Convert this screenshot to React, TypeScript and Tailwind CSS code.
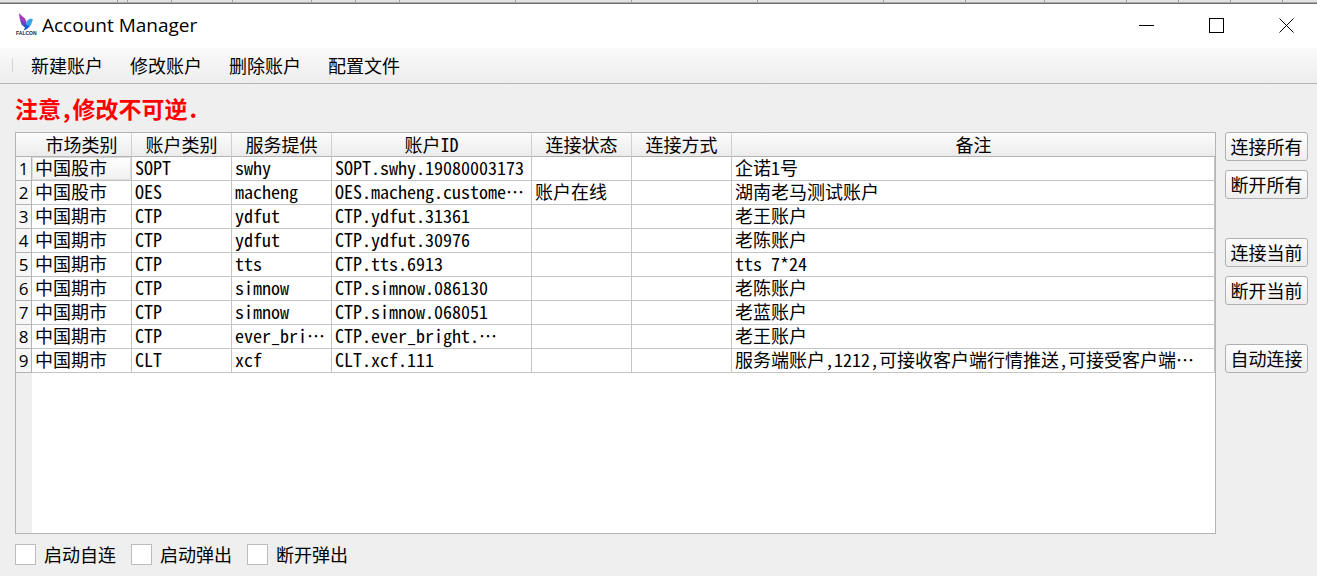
import type { ReactNode } from 'react';

type Account = {
    market: string;
    type: string;
    provider: string;
    id: string;
    status: string;
    mode: string;
    note: string;
};

const columns = ['市场类别', '账户类别', '服务提供', '账户ID', '连接状态', '连接方式', '备注'];

const accounts: Account[] = [
    { market: '中国股市', type: 'SOPT', provider: 'swhy', id: 'SOPT.swhy.19080003173', status: '', mode: '', note: '企诺1号' },
    { market: '中国股市', type: 'OES', provider: 'macheng', id: 'OES.macheng.custome…', status: '账户在线', mode: '', note: '湖南老马测试账户' },
    { market: '中国期市', type: 'CTP', provider: 'ydfut', id: 'CTP.ydfut.31361', status: '', mode: '', note: '老王账户' },
    { market: '中国期市', type: 'CTP', provider: 'ydfut', id: 'CTP.ydfut.30976', status: '', mode: '', note: '老陈账户' },
    { market: '中国期市', type: 'CTP', provider: 'tts', id: 'CTP.tts.6913', status: '', mode: '', note: 'tts 7*24' },
    { market: '中国期市', type: 'CTP', provider: 'simnow', id: 'CTP.simnow.086130', status: '', mode: '', note: '老陈账户' },
    { market: '中国期市', type: 'CTP', provider: 'simnow', id: 'CTP.simnow.068051', status: '', mode: '', note: '老蓝账户' },
    { market: '中国期市', type: 'CTP', provider: 'ever_bri…', id: 'CTP.ever_bright.…', status: '', mode: '', note: '老王账户' },
    { market: '中国期市', type: 'CLT', provider: 'xcf', id: 'CLT.xcf.111', status: '', mode: '', note: '服务端账户,1212,可接收客户端行情推送,可接受客户端…' },
];

const menus = ['新建账户', '修改账户', '删除账户', '配置文件'];
const actionGroups = [['连接所有', '断开所有'], ['连接当前', '断开当前'], ['自动连接']];
const options = ['启动自连', '启动弹出', '断开弹出'];

// widths of the cells in the strip above the window
const stripCells = [118, 10, 44, 61, 79, 44, 44, 116, 116, 126, 126, 82, 79, 82, 52, 52, 52];

function FalconLogo() {
    return (
        <svg viewBox="0 0 20 26" className="w-5 h-[26px] overflow-visible" aria-hidden="true">
            <path d="M3 1 L6 4 L9 6.5 L10.5 9.5 L10.5 13 L7 12 L4.5 9.5 L3.5 6 Z" fill="#a23cc4" />
            <path d="M4.5 8.5 L10 10.5 L11 14 L8.5 14.5 L5.5 12.5 Z" fill="#5f45c8" />
            <path d="M10 13 L11 9 L12.5 7.5 L14.5 6.5 L17 7.5 L16 10 L15 13 L12.5 15.5 L9 15.5 Z" fill="#35a3e6" />
            <path d="M6 13 L10.5 12.5 L13.5 14.5 L11 17 L7.5 18.5 L9 15.5 Z" fill="#2358cc" />
            <text x="0" y="23" fontSize="5" fontWeight="700" fill="#1f2636" fontFamily="Liberation Sans, sans-serif">FALCON</text>
        </svg>
    );
}

function WindowButton({ label, children }: { label: string; children: ReactNode }) {
    return (
        <button aria-label={label} className="w-[60px] h-10 flex items-center justify-center hover:bg-gray-200">
            <svg viewBox="0 0 15 15" className="w-[15px] h-[15px]" fill="none" stroke="#000" strokeWidth="1">
                {children}
            </svg>
        </button>
    );
}

// Elided text gets its ellipsis centred on the line, as in Chinese text
function CellText({ value }: { value: string }) {
    if (!value.endsWith('…')) return <>{value}</>;
    return (
        <>
            {value.slice(0, -1)}
            <span lang="zh-CN" className="inline-block">⋯</span>
        </>
    );
}

export default function App() {
    return (
        <div className="min-h-screen flex flex-col bg-[#efefef] text-black text-lg leading-6 font-['Noto_Sans_Mono_CJK_SC','Noto_Sans_CJK_SC',monospace]">
            <div className="h-[3px] flex overflow-hidden bg-[#e2e2e2] border-b border-[#a8a8a8]">
                {stripCells.map((width, i) => (
                    <span key={i} className="shrink-0 border-r border-[#a0a0a0]" style={{ width }} />
                ))}
            </div>

            {/* Title bar */}
            <header className="h-[45px] pb-0.5 pr-px bg-white border-t border-[#6e6e6e] flex items-center">
                <div className="flex items-center gap-1.5 pl-4 flex-1">
                    <FalconLogo />
                    <h1 className="text-[19px] font-['Open_Sans',sans-serif]">Account Manager</h1>
                </div>
                <div className="flex gap-2.5">
                    <WindowButton label="Minimize"><path d="M0 7.5 H15" /></WindowButton>
                    <WindowButton label="Maximize"><rect x="0.5" y="0.5" width="14" height="14" /></WindowButton>
                    <WindowButton label="Close"><path d="M0.5 0.5 L14.5 14.5 M14.5 0.5 L0.5 14.5" /></WindowButton>
                </div>
            </header>

            {/* Menu */}
            <nav className="h-9 pb-px flex items-center pl-3 border-b border-[#b4b4b4] bg-linear-to-b from-[#fafafa] to-[#ededed]">
                <span className="w-px h-3.5 mr-[18px] bg-[#d4d4d4]" />
                <div className="flex gap-[27px]">
                    {menus.map((m) => (
                        <button key={m}>{m}</button>
                    ))}
                </div>
            </nav>

            <main className="flex-1 flex flex-col pl-[15px] pr-[9px] pb-[11px]">
                <p className="h-12 pt-3 text-[23px] leading-6 font-bold text-[#ff0000]">注意,修改不可逆.</p>

                <div className="flex-1 flex gap-[9px]">
                    {/* Accounts */}
                    <div className="flex-1 min-w-0 flex flex-col border border-[#b4b4b4] bg-white">
                        <table className="w-full table-fixed border-separate border-spacing-0">
                            <colgroup>
                                <col className="w-4" />
                                <col className="w-[100px]" />
                                <col className="w-[100px]" />
                                <col className="w-[100px]" />
                                <col className="w-[200px]" />
                                <col className="w-[100px]" />
                                <col className="w-[100px]" />
                                <col />
                            </colgroup>
                            <thead className="bg-linear-to-b from-[#fcfcfc] to-[#ebebeb]">
                                <tr className="h-6">
                                    <td className="border-b border-[#b4b4b4]" />
                                    {columns.map((c) => (
                                        <th key={c} className="p-0 font-normal leading-[23px] border-b border-r border-b-[#b4b4b4] border-r-[#cfcfcf] last:border-r-0">{c}</th>
                                    ))}
                                </tr>
                            </thead>
                            <tbody>
                                {accounts.map((a, i) => (
                                    <tr key={a.id} className="h-6">
                                        <th className="p-0 align-top font-normal text-[17px] leading-[23px] font-['Open_Sans',sans-serif] bg-[#f6f6f6] border-b border-r border-[#b4b4b4]">{i + 1}</th>
                                        {[a.market, a.type, a.provider, a.id, a.status, a.mode, a.note].map((value, c) => (
                                            <td
                                                key={c}
                                                className={`py-0 px-[3px] align-top leading-[21px] whitespace-nowrap border-b border-r border-[#c4c4c4] ${i === 0 && c === 0 ? 'bg-linear-to-b from-white to-[#f0f0f0] inset-ring inset-ring-[#dcdcdc]' : ''}`}
                                            >
                                                <CellText value={value} />
                                            </td>
                                        ))}
                                    </tr>
                                ))}
                            </tbody>
                        </table>
                        <div className="flex-1 w-4 bg-[#efefef]" />
                    </div>

                    {/* Actions */}
                    <div className="flex flex-col gap-[39px]">
                        {actionGroups.map((group) => (
                            <div key={group[0]} className="flex flex-col gap-[9px]">
                                {group.map((label) => (
                                    <button key={label} className="w-[83px] h-[29px] leading-[27px] whitespace-nowrap border border-[#b0b0b0] rounded-[3px] bg-linear-to-b from-[#fdfdfd] to-[#eeeeee]">
                                        {label}
                                    </button>
                                ))}
                            </div>
                        ))}
                    </div>
                </div>

                <div className="flex gap-[15px] pt-2.5 h-[31px]">
                    {options.map((o) => (
                        <label key={o} className="flex items-center gap-2 leading-[21px]">
                            <input type="checkbox" className="appearance-none w-[21px] h-[21px] bg-white border border-[#bcbcbc] checked:bg-gray-400" />
                            {o}
                        </label>
                    ))}
                </div>
            </main>
        </div>
    );
}
